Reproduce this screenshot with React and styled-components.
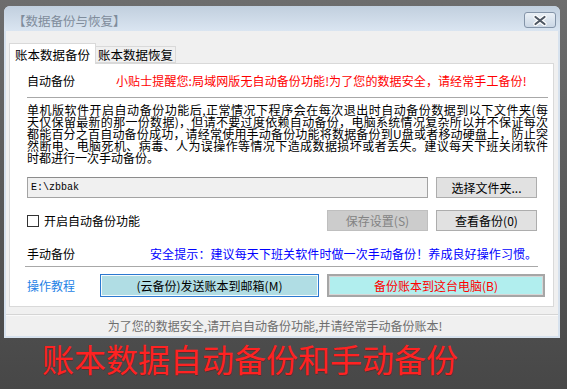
import React from "react";
import styled, { createGlobalStyle } from "styled-components";

const GlobalStyle = createGlobalStyle`
  html, body {
    margin: 0;
    padding: 0;
  }
  body {
    width: 567px;
    height: 389px;
    overflow: hidden;
    background: linear-gradient(#6d6d6d, #474747);
    font-family: "Noto Sans CJK SC", "Noto Sans", sans-serif;
    font-size: 12px;
    color: #000;
  }
`;

const Page = styled.div`
  box-sizing: border-box;
  height: 389px;
  padding: 6px 0 0 4px;
  display: flex;
  flex-direction: column;
`;

const Window = styled.div`
  box-sizing: border-box;
  width: 556px;
  height: 332px;
  border-radius: 6px 6px 0 0;
  overflow: hidden;
  background: #d7e2ee;
  display: flex;
  flex-direction: column;
`;

const TitleBar = styled.div`
  box-sizing: border-box;
  height: 25px;
  padding: 3px 4px 0 9px;
  display: flex;
  align-items: center;
  justify-content: space-between;
  background: linear-gradient(#c1cfde, #dae5f1);
`;

const Title = styled.span`
  color: #7f8c9b;
  font-size: 12.5px;
`;

const CloseButton = styled.div`
  box-sizing: border-box;
  width: 32px;
  height: 16px;
  border: 1px solid #8494a8;
  border-radius: 3px;
  background: linear-gradient(#eaf0f6, #cbd7e5);
  display: flex;
  align-items: center;
  justify-content: center;
`;

const Body = styled.div`
  flex: 1;
  margin: 0 2px 2px;
  padding: 12px 4px 0 3px;
  background: #f0f0f0;
  display: flex;
  flex-direction: column;
`;

const Tabs = styled.div`
  position: relative;
  z-index: 1;
  height: 21px;
  margin-bottom: -1px;
  display: flex;
  align-items: flex-end;
`;

const Tab = styled.div`
  box-sizing: border-box;
  width: ${(p) => (p.$active ? "87px" : "80px")};
  height: ${(p) => (p.$active ? "21px" : "17px")};
  margin-bottom: ${(p) => (p.$active ? "0" : "1px")};
  border: 1px solid #d9d9d9;
  border-left: ${(p) => (p.$active ? "1px solid #d9d9d9" : "none")};
  border-bottom: ${(p) => (p.$active ? "none" : "1px solid #d9d9d9")};
  background: ${(p) => (p.$active ? "#fff" : "#f0f0f0")};
  font-size: 12.5px;
  display: flex;
  align-items: center;
  justify-content: center;
`;

const Panel = styled.div`
  box-sizing: border-box;
  height: 244px;
  background: #fff;
  border: 1px solid #d9d9d9;
  padding: 0 5px 0 17px;
  display: flex;
  flex-direction: column;
`;

const Row = styled.div`
  display: flex;
  align-items: center;
  height: ${(p) => p.$h}px;
  margin-top: ${(p) => p.$mt || 0}px;
`;

const Label = styled.span`
  width: ${(p) => p.$w}px;
  flex-shrink: 0;
  color: ${(p) => p.$color || "#000"};
`;

const Tip = styled.span`
  color: ${(p) => p.$color};
  white-space: nowrap;
  letter-spacing: 0.1px;
`;

const Divider = styled.div`
  height: 1px;
  background: #a8a8a8;
`;

const LowerDivider = styled(Divider)`
  width: 513px;
  margin-left: -2px;
`;

const Paragraph = styled.div`
  margin-top: 6px;
  width: 521px;
  font-size: 12px;
  line-height: 12px;
`;

const Line = styled.span`
  display: block;
  text-align: justify;
  text-align-last: ${(p) => (p.$last ? "left" : "justify")};
`;

const PathBox = styled.div`
  box-sizing: border-box;
  width: 401px;
  height: 21px;
  margin-right: 8px;
  padding-left: 3px;
  border: 1px solid #a3a3a3;
  border-top-color: #8c8c8c;
  background: #f0f0f0;
  font-family: "Liberation Mono", monospace;
  font-size: 10px;
  display: flex;
  align-items: center;
`;

const Button = styled.div`
  box-sizing: border-box;
  width: 101px;
  height: 21px;
  border: 1px solid ${(p) => (p.$disabled ? "#bfbfbf" : "#adadad")};
  background: ${(p) => (p.$disabled ? "#cccccc" : "#e1e1e1")};
  color: ${(p) => (p.$disabled ? "#838383" : "#000")};
  display: flex;
  align-items: center;
  justify-content: center;
  white-space: nowrap;
`;

const CheckLabel = styled.label`
  display: flex;
  align-items: center;
  gap: 5px;
`;

const CheckBox = styled.span`
  box-sizing: border-box;
  width: 12px;
  height: 12px;
  border: 1px solid #333;
  background: #fff;
`;

const ButtonGroup = styled.div`
  margin-left: auto;
  margin-right: 11px;
  display: flex;
  gap: 8px;
`;

const BigButton = styled.div`
  box-sizing: border-box;
  width: ${(p) => p.$w}px;
  height: 23px;
  display: flex;
  align-items: center;
  justify-content: center;
  white-space: nowrap;
`;

const CloudButton = styled(BigButton)`
  border: 1px solid #2b78d0;
  box-shadow: inset 0 0 0 1px #f4fbfc;
  background: #b0dde4;
  margin-right: 8px;
`;

const LocalButton = styled(BigButton)`
  border: 2px solid #a6a6a6;
  box-shadow: inset 0 0 0 1px #d6d6d6;
  background: #b1eeee;
  color: #ff0000;
`;

const StatusBar = styled.div`
  flex: 1;
  margin: 7px -4px 0 -3px;
  border-top: 1px solid #d5d5d5;
  box-shadow: inset 0 1px 0 #fafafa;
  color: #6e6e6e;
  display: flex;
  align-items: center;
  justify-content: center;
  padding-right: 14px;
`;

const Caption = styled.div`
  height: 40px;
  line-height: 40px;
  padding-left: 38px;
  font-size: 32px;
  color: #ff2222;
  text-shadow: 1px 1px 0 rgba(110, 0, 0, 0.35);
  white-space: nowrap;
`;

const CloseIcon = () => (
  <svg width="14" height="11" viewBox="0 0 14 11">
    <path d="M2.5 2 L11.5 9 M11.5 2 L2.5 9" stroke="#ffffff" strokeWidth="4.2" strokeLinecap="round" />
    <path d="M2.5 2 L11.5 9 M11.5 2 L2.5 9" stroke="#4f5864" strokeWidth="2.2" strokeLinecap="round" />
  </svg>
);

const lines = [
  "单机版软件开启自动备份功能后,正常情况下程序会在每次退出时自动备份数据到以下文件夹(每",
  "天仅保留最新的那一份数据)，但请不要过度依赖自动备份，电脑系统情况复杂所以并不保证每次",
  "都能百分之百自动备份成功，请经常使用手动备份功能将数据备份到U盘或者移动硬盘上，防止突",
  "然断电、电脑死机、病毒、人为误操作等情况下造成数据损坏或者丢失。建议每天下班关闭软件",
  "时都进行一次手动备份。",
];

const App = () => {
  return (
    <>
      <GlobalStyle />
      <Page>
        <Window>
          <TitleBar>
            <Title>【数据备份与恢复】</Title>
            <CloseButton>
              <CloseIcon />
            </CloseButton>
          </TitleBar>
          <Body>
            <Tabs>
              <Tab $active>账本数据备份</Tab>
              <Tab>账本数据恢复</Tab>
            </Tabs>
            <Panel>
              <Row $h={33}>
                <Label $w={89}>自动备份</Label>
                <Tip $color="#ff0000">小贴士提醒您:局域网版无自动备份功能!为了您的数据安全，请经常手工备份!</Tip>
              </Row>
              <Divider />
              <Paragraph>
                {lines.map((text, i) => (
                  <Line key={i} $last={i === lines.length - 1}>
                    {text}
                  </Line>
                ))}
              </Paragraph>
              <Row $h={21} $mt={13}>
                <PathBox>E:\zbbak</PathBox>
                <Button>选择文件夹...</Button>
              </Row>
              <Row $h={21} $mt={12}>
                <CheckLabel>
                  <CheckBox />
                  开启自动备份功能
                </CheckLabel>
                <ButtonGroup>
                  <Button $disabled>保存设置(S)</Button>
                  <Button>查看备份(0)</Button>
                </ButtonGroup>
              </Row>
              <Row $h={26} $mt={9}>
                <Label $w={123}>手动备份</Label>
                <Tip $color="#0000ff">安全提示：建议每天下班关软件时做一次手动备份！养成良好操作习惯。</Tip>
              </Row>
              <LowerDivider />
              <Row $h={23} $mt={7}>
                <Label $w={73} $color="#1e82e6">操作教程</Label>
                <CloudButton $w={219}>(云备份)发送账本到邮箱(M)</CloudButton>
                <LocalButton $w={218}>备份账本到这台电脑(B)</LocalButton>
              </Row>
            </Panel>
            <StatusBar>为了您的数据安全,请开启自动备份功能,并请经常手动备份账本!</StatusBar>
          </Body>
        </Window>
        <Caption>账本数据自动备份和手动备份</Caption>
      </Page>
    </>
  );
};

export default App;
